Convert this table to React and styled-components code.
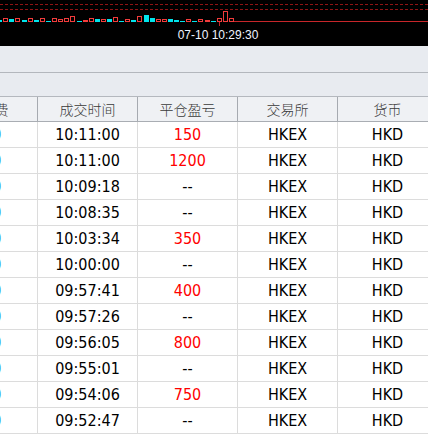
import React from "react";
import styled, { createGlobalStyle } from "styled-components";

const GlobalStyle = createGlobalStyle`
  html, body {
    margin: 0;
    padding: 0;
    background: #ffffff;
    overflow: hidden;
  }
  body {
    font-family: "Liberation Sans", "Noto Sans CJK SC", sans-serif;
  }
`;

// volume bars under the price chart: [height, up?]
const BARS = [
  [2, 0], [3, 1], [3, 0], [3, 1], [2, 0], [3, 1], [2, 0], [3, 1], [1, 0], [3, 1],
  [2, 1], [3, 1], [5, 1], [1, 0], [1, 1], [3, 1], [3, 0], [2, 1], [3, 0], [4, 1],
  [1, 0], [2, 1], [2, 0], [5, 1], [7, 0], [4, 0], [2, 1], [2, 1], [3, 0], [2, 0],
  [1, 0], [2, 1], [1, 0], [2, 1], [1, 1], [1, 0], [3, 1], [10, 1], [3, 1],
];

const ROWS = [
  ["10:11:00", "150"],
  ["10:11:00", "1200"],
  ["10:09:18", "--"],
  ["10:08:35", "--"],
  ["10:03:34", "350"],
  ["10:00:00", "--"],
  ["09:57:41", "400"],
  ["09:57:26", "--"],
  ["09:56:05", "800"],
  ["09:55:01", "--"],
  ["09:54:06", "750"],
  ["09:52:47", "--"],
];

const HEADERS = ["手续费", "成交时间", "平仓盈亏", "交易所", "货币"];

export default function App() {
  return (
    <>
      <GlobalStyle />
      <Page>
        <ChartPanel>
          <VolumeChart />
          <TimeLabel>07-10 10:29:30</TimeLabel>
        </ChartPanel>
        <ToolBand />
        <SubBand />
        <Table>
          <HeaderRow>
            {HEADERS.map((h) => (
              <HeadCell key={h}>{h}</HeadCell>
            ))}
          </HeaderRow>
          {ROWS.map(([time, pnl], i) => (
            <Row key={i}>
              <FeeCell>6.50</FeeCell>
              <Cell>{time}</Cell>
              <Cell $color={pnl === "--" ? "#000" : "#ff0000"}>{pnl}</Cell>
              <Cell>HKEX</Cell>
              <Cell>HKD</Cell>
            </Row>
          ))}
        </Table>
      </Page>
    </>
  );
}

function VolumeChart() {
  const base = 21;
  return (
    <ChartSvg width="428" height="26" viewBox="0 0 428 26">
      <line x1="0" y1="4.5" x2="428" y2="4.5" stroke="#8e1414" strokeDasharray="3 2" />
      <line x1="0" y1="9.5" x2="428" y2="9.5" stroke="#8e1414" strokeDasharray="3 2" />
      <line x1="233" y1={base + 0.5} x2="428" y2={base + 0.5} stroke="#c8262a" />
      <line x1="219.5" y1={base} x2="219.5" y2="26" stroke="#c8262a" />
      {BARS.map(([h, up], i) => {
        const x = Math.round(-2.8 + 6.1 * i);
        return up ? (
          <rect
            key={i}
            x={x + 0.5}
            y={base - h + 0.5}
            width="4"
            height={h}
            fill="none"
            stroke="#f23c3c"
          />
        ) : (
          <rect key={i} x={x} y={base + 1 - h} width="5" height={h} fill="#00e4ec" />
        );
      })}
    </ChartSvg>
  );
}

// Styled Components

const Page = styled.div`
  width: 428px;
  height: 434px;
  display: flex;
  flex-direction: column;
  overflow: hidden;
`;

const ChartPanel = styled.div`
  background: #000000;
  height: 46px;
  display: flex;
  flex-direction: column;
`;

const ChartSvg = styled.svg`
  display: block;
`;

const TimeLabel = styled.div`
  height: 18px;
  line-height: 18px;
  padding-left: 8px;
  text-align: center;
  color: #eef4ff;
  font-size: 12px;
  font-family: "Liberation Sans", sans-serif;
`;

const ToolBand = styled.div`
  height: 26px;
  background: #e8ebf0;
  border-bottom: 1px solid #b3b7bd;
`;

const SubBand = styled.div`
  height: 23px;
  background: #e8ebf0;
`;

const Table = styled.div`
  margin-left: -62px;
  display: flex;
  flex-direction: column;
`;

const HeaderRow = styled.div`
  display: grid;
  grid-template-columns: repeat(5, 100px);
  height: 26px;
  box-sizing: border-box;
  background: #eff1f4;
  border-top: 1px solid #b4b8be;
  border-bottom: 1px solid #a9adb3;
`;

const HeadCell = styled.div`
  box-sizing: border-box;
  border-right: 1px solid #a6aab0;
  display: flex;
  align-items: center;
  justify-content: center;
  color: #3a3a3a;
  font-size: 14px;
  font-weight: 300;
  font-family: "Noto Sans CJK SC", sans-serif;
`;

const Row = styled.div`
  display: grid;
  grid-template-columns: repeat(5, 100px);
  height: 26px;
  box-sizing: border-box;
  background: #ffffff;
  border-bottom: 1px solid #dcdcdc;
`;

const Cell = styled.div`
  box-sizing: border-box;
  border-right: 1px solid #dcdcdc;
  display: flex;
  align-items: center;
  justify-content: center;
  color: ${(p) => p.$color || "#000000"};
  font-size: 16px;
  font-family: "DejaVu Sans Condensed", "DejaVu Sans", sans-serif;
  font-stretch: condensed;
`;

const FeeCell = styled(Cell)`
  color: #1e8fe6;
  padding-right: 4px;
`;
